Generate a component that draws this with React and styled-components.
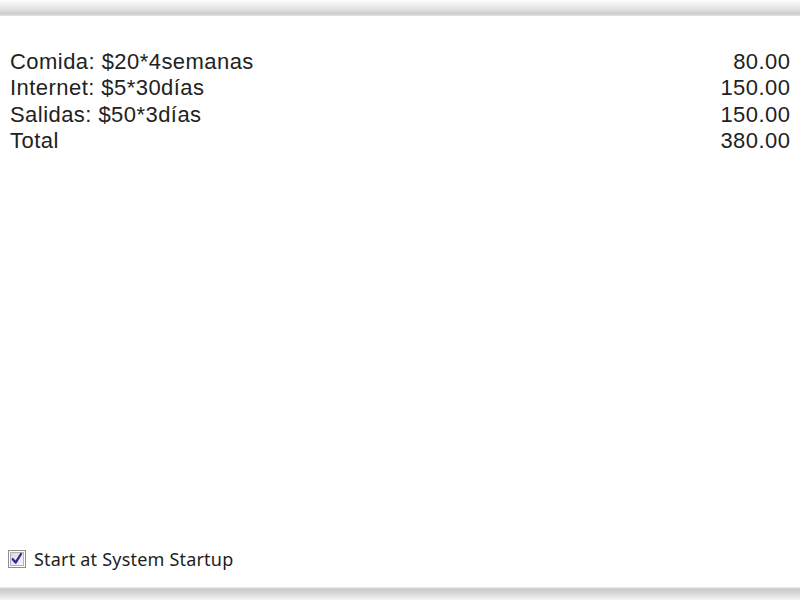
import React from "react"
import styled, { createGlobalStyle } from "styled-components"

const GlobalStyle = createGlobalStyle`
  html, body {
    margin: 0;
    padding: 0;
    background: #ffffff;
  }
`

const Window = styled.div`
  width: 800px;
  height: 600px;
  display: flex;
  flex-direction: column;
  background: #ffffff;
  overflow: hidden;
`

const Edge = styled.div`
  height: ${({ $h }) => $h}px;
  flex: none;
  background: ${({ $bottom }) =>
    $bottom
      ? "linear-gradient(to bottom, #f2f2f2 0px, #c9c9c9 2px, #d6d6d6 6px, #e9e9e9 10px, #f4f4f4 13px)"
      : "linear-gradient(to bottom, #ffffff 0px, #f0f0f0 4px, #e2e2e2 9px, #cccccc 14px, #e8e8e8 16px)"};
`

const Body = styled.div`
  flex: 1;
  display: flex;
  flex-direction: column;
  padding: 33px 10px 0 10px;
`

const Table = styled.div`
  display: grid;
  grid-template-columns: 1fr auto;
  font-family: "Liberation Sans", Arial, sans-serif;
  font-size: 22px;
  letter-spacing: 0.45px;
  line-height: 26.4px;
  color: #222222;
`

const Cell = styled.div`
  text-align: ${({ $right }) => ($right ? "right" : "left")};
  white-space: nowrap;
  margin-right: ${({ $right }) => ($right ? "-0.45px" : "0")};
`

const Footer = styled.label`
  margin-top: auto;
  margin-bottom: 16px;
  margin-left: -2px;
  display: flex;
  align-items: center;
  gap: 8px;
  font-family: "Noto Sans", "Open Sans", sans-serif;
  font-size: 18px;
  color: #1e1e1e;
  letter-spacing: 0.2px;
`

const CheckBox = () => (
  <svg width="18" height="18" viewBox="0 0 18 18">
    <defs>
      <linearGradient id="cbfill" x1="0" y1="0" x2="1" y2="1">
        <stop offset="0" stopColor="#d9d9d9" />
        <stop offset="1" stopColor="#f7f7f7" />
      </linearGradient>
    </defs>
    <rect x="0.5" y="0.5" width="17" height="17" fill="#ffffff" stroke="#8e8f8f" />
    <rect x="2.5" y="2.5" width="13" height="13" fill="url(#cbfill)" stroke="#b3b3b3" />
    <path d="M4.8 9.2 L7.6 12.6 L13 4" fill="none" stroke="#2a2aa0" strokeWidth="2.3" strokeLinecap="round" strokeLinejoin="round" />
  </svg>
)

const rows = [
  ["Comida: $20*4semanas", "80.00"],
  ["Internet: $5*30días", "150.00"],
  ["Salidas: $50*3días", "150.00"],
  ["Total", "380.00"],
]

const App = () => (
  <Window>
    <GlobalStyle />
    <Edge $h={16} />
    <Body>
      <Table>
        {rows.map(([label, amount]) => (
          <React.Fragment key={label}>
            <Cell>{label}</Cell>
            <Cell $right>{amount}</Cell>
          </React.Fragment>
        ))}
      </Table>
      <Footer>
        <CheckBox />
        Start at System Startup
      </Footer>
    </Body>
    <Edge $h={13} $bottom />
  </Window>
)

export default App
